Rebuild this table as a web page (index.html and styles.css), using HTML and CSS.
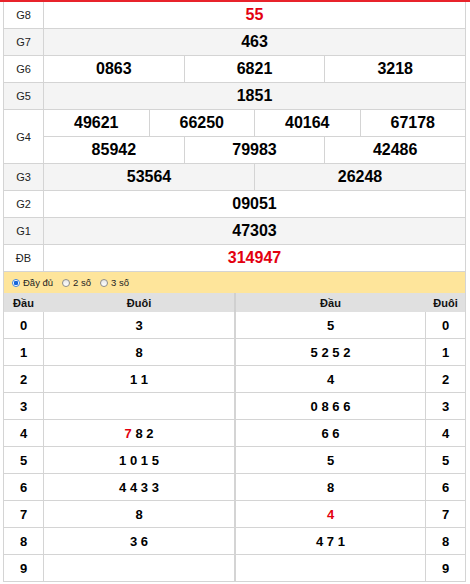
FILE: index.html
```html
<!DOCTYPE html>
<html lang="vi">
<head>
<meta charset="utf-8">
<link rel="stylesheet" href="styles.css">
</head>
<body>
<div class="topbar"></div>
<div class="box">
  <div class="prizes">
    <div class="row"><div class="lbl">G8</div><div class="vals"><div class="cell red">55</div></div></div>
    <div class="row alt"><div class="lbl">G7</div><div class="vals"><div class="cell">463</div></div></div>
    <div class="row"><div class="lbl">G6</div><div class="vals"><div class="cell">0863</div><div class="cell">6821</div><div class="cell">3218</div></div></div>
    <div class="row alt"><div class="lbl">G5</div><div class="vals"><div class="cell">1851</div></div></div>
    <div class="row"><div class="lbl">G4</div>
      <div class="stack">
        <div class="vals sub"><div class="cell">49621</div><div class="cell">66250</div><div class="cell">40164</div><div class="cell">67178</div></div>
        <div class="vals"><div class="cell">85942</div><div class="cell">79983</div><div class="cell">42486</div></div>
      </div>
    </div>
    <div class="row alt"><div class="lbl">G3</div><div class="vals"><div class="cell">53564</div><div class="cell">26248</div></div></div>
    <div class="row"><div class="lbl">G2</div><div class="vals"><div class="cell">09051</div></div></div>
    <div class="row alt"><div class="lbl">G1</div><div class="vals"><div class="cell">47303</div></div></div>
    <div class="row"><div class="lbl">ĐB</div><div class="vals"><div class="cell red">314947</div></div></div>
  </div>
  <div class="opts">
    <label class="opt"><span class="radio on"></span>Đầy đủ</label>
    <label class="opt"><span class="radio"></span>2 số</label>
    <label class="opt"><span class="radio"></span>3 số</label>
  </div>
  <div class="loto">
    <div class="lrow head"><div class="c1">Đầu</div><div class="c2">Đuôi</div><div class="c3">Đầu</div><div class="c4">Đuôi</div></div>
    <div class="lrow"><div class="c1">0</div><div class="c2">3</div><div class="c3">5</div><div class="c4">0</div></div>
    <div class="lrow"><div class="c1">1</div><div class="c2">8</div><div class="c3">5 2 5 2</div><div class="c4">1</div></div>
    <div class="lrow"><div class="c1">2</div><div class="c2">1 1</div><div class="c3">4</div><div class="c4">2</div></div>
    <div class="lrow"><div class="c1">3</div><div class="c2"></div><div class="c3">0 8 6 6</div><div class="c4">3</div></div>
    <div class="lrow"><div class="c1">4</div><div class="c2"><span class="red">7</span> 8 2</div><div class="c3">6 6</div><div class="c4">4</div></div>
    <div class="lrow"><div class="c1">5</div><div class="c2">1 0 1 5</div><div class="c3">5</div><div class="c4">5</div></div>
    <div class="lrow"><div class="c1">6</div><div class="c2">4 4 3 3</div><div class="c3">8</div><div class="c4">6</div></div>
    <div class="lrow"><div class="c1">7</div><div class="c2">8</div><div class="c3"><span class="red">4</span></div><div class="c4">7</div></div>
    <div class="lrow"><div class="c1">8</div><div class="c2">3 6</div><div class="c3">4 7 1</div><div class="c4">8</div></div>
    <div class="lrow"><div class="c1">9</div><div class="c2"></div><div class="c3"></div><div class="c4">9</div></div>
  </div>
</div>
</body>
</html>
```
FILE: styles.css
```css
* { box-sizing: border-box; }
html, body { margin: 0; padding: 0; background: #fff; }
body { font-family: "Liberation Sans", Arial, sans-serif; color: #000; }

.topbar { height: 2px; background: #e8232b; }

.box {
  margin-left: 3px;
  width: 463px;
  border-left: 1px solid #d4d4d4;
  border-right: 1px solid #d4d4d4;
}

.row {
  display: flex;
  border-bottom: 1px solid #d4d4d4;
}
.row.alt { background: #f4f4f4; }

.lbl {
  width: 40px;
  flex: none;
  border-right: 1px solid #d4d4d4;
  display: flex;
  align-items: center;
  justify-content: center;
  font-size: 11px;
  color: #222;
}

.stack { flex: 1; display: flex; flex-direction: column; }

.vals { flex: 1; display: flex; }
.vals.sub { border-bottom: 1px solid #d4d4d4; }

.cell {
  flex: 1;
  height: 26px;
  line-height: 26px;
  text-align: center;
  font-size: 16px;
  font-weight: bold;
}
.cell + .cell { border-left: 1px solid #d4d4d4; }

.red { color: #e3000f; }

.opts {
  height: 21px;
  background: #fee59b;
  display: flex;
  align-items: center;
  padding-left: 8px;
  gap: 9px;
  font-size: 9.5px;
  color: #222;
}
.opt { display: flex; align-items: center; gap: 3px; }
.radio {
  width: 8px;
  height: 8px;
  border-radius: 50%;
  border: 1px solid #8d8d8d;
  background: linear-gradient(#e6e6e6, #ffffff);
}
.radio.on {
  border-color: #3d86e8;
  background: radial-gradient(circle, #1565d8 0 2px, #ffffff 2.5px);
}

.lrow {
  display: grid;
  grid-template-columns: 40px 192px 1fr 40px;
  border-bottom: 1px solid #d4d4d4;
  height: 27px;
  font-size: 13px;
  font-weight: bold;
}
.lrow > div {
  display: flex;
  align-items: center;
  justify-content: center;
  white-space: pre;
}
.lrow .c1 { border-right: 1px solid #d4d4d4; }
.lrow .c2 { border-right: 2px solid #d4d4d4; }
.lrow .c4 { border-left: 1px solid #d4d4d4; }

.lrow.head {
  height: 19px;
  background: #e0e0e0;
  border-bottom: none;
  font-size: 11px;
  color: #111;
}
.lrow.head .c1, .lrow.head .c4 { border-color: transparent; }
.lrow.head .c2 { border-right-color: #d0d0d0; }
```
